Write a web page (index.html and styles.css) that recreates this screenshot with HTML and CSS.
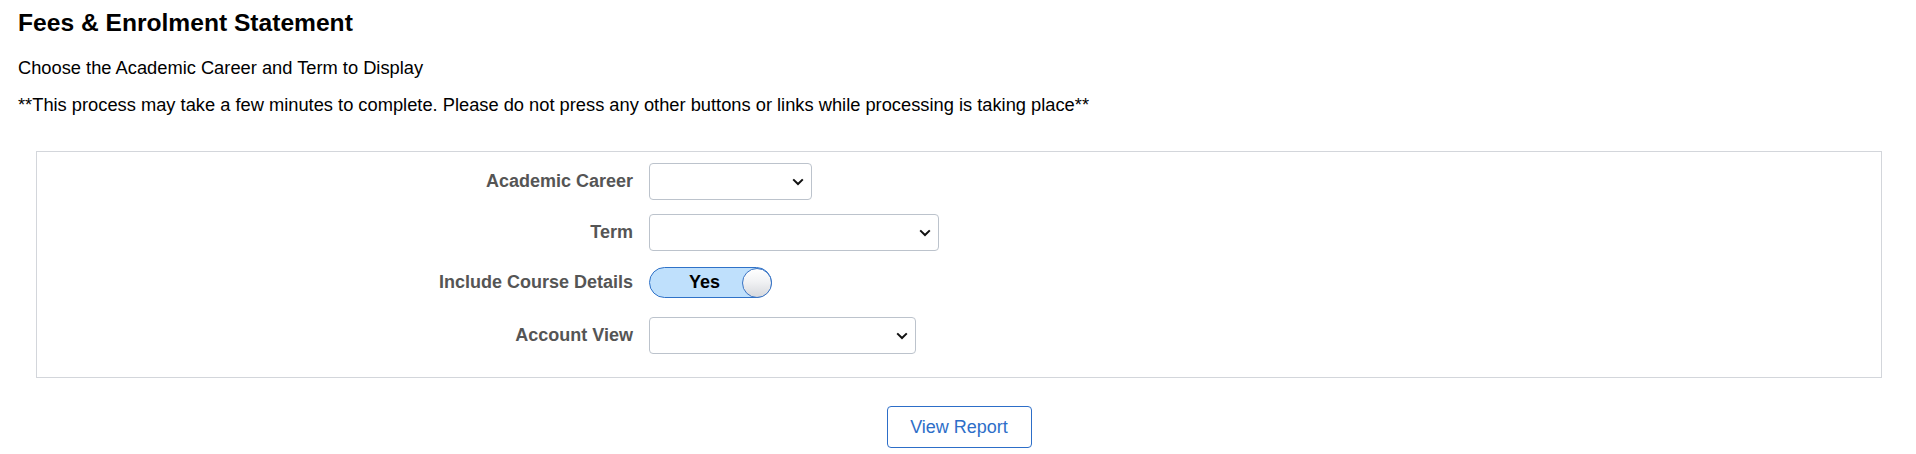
FILE: index.html
```html
<!DOCTYPE html>
<html lang="en">
<head>
<meta charset="utf-8">
<title>Fees &amp; Enrolment Statement</title>
<link rel="stylesheet" href="styles.css">
</head>
<body>
<div class="page">
  <h1 class="title">Fees &amp; Enrolment Statement</h1>
  <p class="intro">Choose the Academic Career and Term to Display</p>
  <p class="note">**This process may take a few minutes to complete. Please do not press any other buttons or links while processing is taking place**</p>

  <div class="panel">
    <div class="row row-career">
      <label class="label">Academic Career</label>
      <div class="field">
        <div class="select-wrap w-career">
          <select class="select"><option></option></select>
          <svg class="chev" width="12" height="8" viewBox="0 0 12 8"><path d="M1.2 1.4 L6 6 L10.8 1.4" fill="none" stroke="#111" stroke-width="2"/></svg>
        </div>
      </div>
    </div>
    <div class="row row-term">
      <label class="label">Term</label>
      <div class="field">
        <div class="select-wrap w-term">
          <select class="select"><option></option></select>
          <svg class="chev" width="12" height="8" viewBox="0 0 12 8"><path d="M1.2 1.4 L6 6 L10.8 1.4" fill="none" stroke="#111" stroke-width="2"/></svg>
        </div>
      </div>
    </div>
    <div class="row row-toggle">
      <label class="label">Include Course Details</label>
      <div class="field">
        <div class="toggle">
          <span class="toggle-text">Yes</span>
          <span class="knob"></span>
        </div>
      </div>
    </div>
    <div class="row row-view">
      <label class="label">Account View</label>
      <div class="field">
        <div class="select-wrap w-view">
          <select class="select"><option></option></select>
          <svg class="chev" width="12" height="8" viewBox="0 0 12 8"><path d="M1.2 1.4 L6 6 L10.8 1.4" fill="none" stroke="#111" stroke-width="2"/></svg>
        </div>
      </div>
    </div>
  </div>

  <div class="actions">
    <button class="btn" type="button">View Report</button>
  </div>
</div>
</body>
</html>
```
FILE: styles.css
```css
* { box-sizing: border-box; }

html, body {
  margin: 0;
  padding: 0;
  background: #ffffff;
}

body {
  font-family: "Liberation Sans", Arial, Helvetica, sans-serif;
  color: #000000;
}

.page {
  padding: 8px 16px 0 18px;
}

.title {
  margin: 0;
  font-size: 24.6px;
  line-height: 30px;
  font-weight: bold;
  color: #000;
}

.intro,
.note {
  margin: 0;
  font-size: 18.3px;
  line-height: 37px;
}

.intro { margin-top: 11px; }

.panel {
  margin: 28px 18px 0 18px;
  border: 1px solid #d3d6db;
  padding: 11px 0 23px 0;
  display: flex;
  flex-direction: column;
}

.row {
  display: flex;
  align-items: center;
}

.row-career { margin-bottom: 14px; }
.row-term { margin-bottom: 16px; }
.row-toggle { margin-bottom: 19px; }

.label {
  width: 612px;
  flex: 0 0 612px;
  padding-right: 16px;
  text-align: right;
  font-size: 18px;
  font-weight: bold;
  color: #555555;
}

.field {
  display: flex;
  align-items: center;
}

.select-wrap {
  position: relative;
  height: 37px;
}

.w-career { width: 163px; }
.w-term { width: 290px; }
.w-view { width: 267px; }

.select {
  -webkit-appearance: none;
  appearance: none;
  width: 100%;
  height: 37px;
  border: 1px solid #bcc3cc;
  border-radius: 4px;
  background: #ffffff;
  font-family: inherit;
  font-size: 18px;
  margin: 0;
  padding: 0 30px 0 8px;
}

.chev {
  position: absolute;
  right: 8px;
  top: 15px;
  pointer-events: none;
}

.toggle {
  width: 123px;
  height: 31px;
  border: 1px solid #2f72c8;
  border-radius: 16px;
  background: #bfe0fc;
  display: flex;
  align-items: center;
  justify-content: space-between;
  padding-left: 39px;
}

.toggle-text {
  font-size: 18px;
  font-weight: bold;
  color: #000;
}

.knob {
  width: 30px;
  height: 30px;
  margin-right: -1px;
  border-radius: 50%;
  border: 1px solid #3a74c4;
  background: linear-gradient(to bottom, #ffffff 0%, #f1f2f4 45%, #d6d8dd 100%);
}

.actions {
  display: flex;
  justify-content: center;
  margin-top: 28px;
}

.btn {
  width: 145px;
  height: 42px;
  border: 1px solid #2d6ec8;
  border-radius: 4px;
  background: #ffffff;
  color: #2d6ec8;
  font-family: inherit;
  font-size: 18px;
  padding: 0;
  margin: 0;
}
```
